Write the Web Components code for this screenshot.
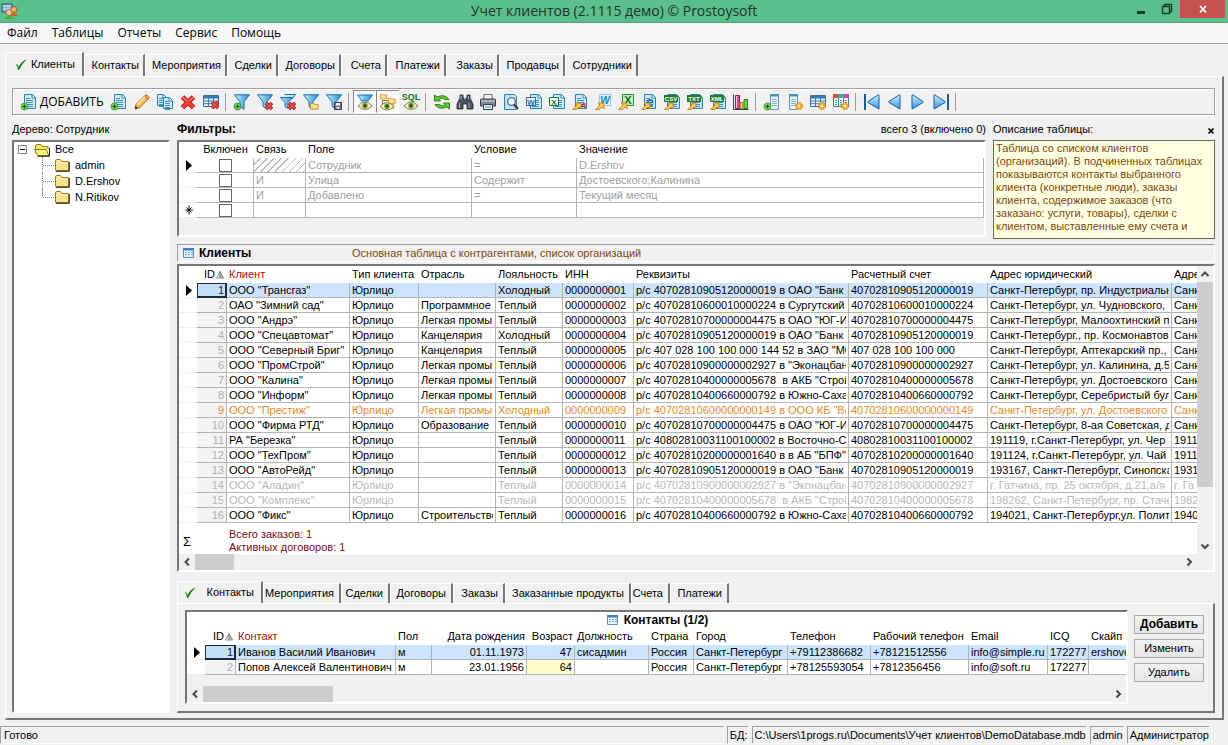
<!DOCTYPE html>
<html lang="ru">
<head>
<meta charset="utf-8">
<title>Учет клиентов</title>
<style>
  html, body { height: 100%; }
  body {
    margin: 0;
    background: #f0f0f0;
    color: #000;
    font: 11px/13px "Liberation Sans", Arial, sans-serif;
  }
</style>
</head>
<body>
<crm-window></crm-window>

<script>
const RESET = `
  * { box-sizing: border-box; }
  :host { box-sizing: border-box; }
  button, input { font: inherit; color: inherit; margin: 0; padding: 0; border: 0; background: none; }
  svg { display: block; }
`;

class BaseElement extends HTMLElement {
  connectedCallback() {
    if (this.shadowRoot) return;
    const root = this.attachShadow({ mode: 'open' });
    const t = document.createElement('template');
    t.innerHTML = `<style>${RESET}${this.css()}</style>${this.html()}`;
    root.append(t.content.cloneNode(true));
  }
  css() { return ':host{display:block}'; }
  html() { return '<slot></slot>'; }
}

/* ---------- icons ---------- */
const page = (x = 3, y = 0, w = 12, h = 15) => `
  <path d="M${x + .5} ${y + .5}h${w - 4}l3 3v${h - 4}h-${w - 1}z" fill="#cdeafa" stroke="#2683b3"/>
  <path d="M${x + w - 4} ${y + 1}v3h3" fill="#fff" stroke="#2683b3"/>
  <path d="M${x + 2} ${y + 4.5}h4M${x + 2} ${y + 6.5}h${w - 5}M${x + 2} ${y + 8.5}h${w - 5}M${x + 2} ${y + 10.5}h${w - 5}M${x + 2} ${y + 12.5}h${w - 5}" stroke="#3f8fc0"/>`;
const plus = (x = 0, y = 9) => `
  <circle cx="${x + 3.5}" cy="${y + 3.5}" r="3.5" fill="#8fdc6a" stroke="#2a8a1c" stroke-width=".8"/>
  <path d="M${x + 3.5} ${y + 1.5}v4M${x + 1.5} ${y + 3.5}h4" stroke="#0a5a08" stroke-width="1.3"/>`;
const redX = (x = 8, y = 8) => `
  <path d="M${x + 1} ${y + 1}l6 6m0-6l-6 6" stroke="#9c1414" stroke-width="3.4"/>
  <path d="M${x + 1} ${y + 1}l6 6m0-6l-6 6" stroke="#ee4a42" stroke-width="1.9"/>`;
const funnel = (dx = 0) => `<path d="M${dx + .5} .8h15l-5.500 7v7.500l-4-3v-4.500z" fill="url(#fn)" stroke="#1b6fa8"/>`;
const eye = (x = 1, y = 8) => `
  <path d="M${x} ${y + 4}q7-8 14 0q-7 7-14 0z" fill="#f6efc6" stroke="#9a7440"/>
  <circle cx="${x + 7}" cy="${y + 3.7}" r="2.700" fill="#5d9a2c"/><circle cx="${x + 7}" cy="${y + 3.7}" r="1.1" fill="#183208"/>`;
const arrow = `<path d="M.5 15.500l4.500-4.500-2-2h6v6l-2-2-2.500 2.500z" fill="#ffc64a" stroke="#c47a10" stroke-width=".8"/>`;
const gear = (x = 12, y = 12) => `
  <circle cx="${x}" cy="${y}" r="3.200" fill="none" stroke="#d48a14" stroke-width="1.800" stroke-dasharray="1.600 .9"/>
  <circle cx="${x}" cy="${y}" r="2.300" fill="#fff0c0" stroke="#f0a828" stroke-width="1.700"/>`;
const table = (h = '#2f7db8') => `
  <path d="M.5 1.500h15v11h-15z" fill="#e3f3fd" stroke="#3a6f9c"/><path d="M1 2h14v2.500h-14z" fill="${h}"/>
  <path d="M1 7h14M1 9.700h14M5.500 4v8M10.500 4v8" stroke="#3f7fb0"/>`;
const folder = (x, y, s = 1) => `<g transform="translate(${x} ${y}) scale(${s})"><path d="M.5 1.500h3l1 1h4v5h-8z" fill="#ffe08a" stroke="#c58a1c" stroke-width=".9"/></g>`;
const tag = (label) => `${page(3, 0, 13, 15)}<path d="M0 1h14v7h-14z" fill="#1f7a2e"/>
  <text x="7" y="7" font-size="6" font-weight="700" fill="#fff" text-anchor="middle">${label}</text>${arrow}`;
const badge = (label, color) => `${page(4, 0, 12, 15)}<path d="M.5 3.500h9v8h-9z" fill="#f2faff" stroke="${color}"/>
  <text x="5" y="10.500" font-size="8" font-weight="700" fill="${color}" text-anchor="middle">${label}</text>`;
const triR = (x) => `<path d="M${x} 1.500v13q0 1 1 0l10-6q1-.5 0-1l-10-6.500q-1-.5-1 .5z" fill="url(#nav)" stroke="#16609e"/>`;
const triL = (x) => `<path d="M${x} 1.500v13q0 1-1 0l-10-6q-1-.5 0-1l10-6.500q1-.5 1 .5z" fill="url(#nav)" stroke="#16609e"/>`;

const ICONS = {
  pageAdd: page() + plus(),
  edit: `<path d="M1 15l1-4.500 9-9q1-1.200 2.300-.2l1.200 1.200q1 1.200 0 2.300l-9 9z" fill="#f9bf45" stroke="#a8671a"/>
    <path d="M3.500 10.500l8-8" stroke="#fff0b0" stroke-width="1.500"/><path d="M1 15l.7-3 2.300 2.300z" fill="#3a2a1a"/>
    <path d="M11 2l3 3" stroke="#d9665a" stroke-width="1.600"/>`,
  copy: page(0, 0, 10, 12) + page(6, 3, 10, 12),
  remove: `<path d="M2.500 3l11 10.500m0-10.500l-11 10.500" stroke="#a31515" stroke-width="5"/>
    <path d="M2.500 3l11 10.500m0-10.500l-11 10.500" stroke="#ee3e38" stroke-width="3.400"/><path d="M2 2.500l5 4.500M14 2.500l-4 4" stroke="#ff9a90"/>`,
  tableDel: table() + redX(8, 7),
  fAdd: funnel() + plus(0, 9),
  fDel: funnel() + redX(8, 8),
  fDelAll: `<path d="M4.500.5h11l-4 5" fill="#bfe6fb" stroke="#1b6fa8"/><path d="M.5 3.500h12l-4.500 5v6l-3-2v-4z" fill="url(#fn)" stroke="#1b6fa8"/>` + redX(8, 8),
  fOpen: funnel() + folder(7, 8, .95),
  fSave: funnel() + `<path d="M8.500 8.500h7v7h-7z" fill="#7a6e90" stroke="#3a3048"/><path d="M10 9h4v2.500h-4z" fill="#f4f4fa"/><path d="M10.500 13h3v2h-3z" fill="#d8d8e4"/>`,
  fEye: `<path d="M.5 1h15l-4.500 6h-6z" fill="url(#fn)" stroke="#1b6fa8"/>` + eye(1, 8),
  treeEye: `<path d="M2.500 6v6.500h6M2.500 6.500h6" fill="none" stroke="#8a7a50"/>` + folder(0, -1, .8) + folder(8, 3, .85) + folder(8, 9, .7) + eye(0, 8.5),
  sql: `<text x="8" y="6" font-size="9" font-weight="700" fill="#11752a" text-anchor="middle">SQL</text>` + eye(1, 8),
  refresh: `<path d="M.5 1v6h6l-2-2q4-2 6.500.5h4q-4-6-12-2.500z" fill="#5ed02a" stroke="#237a12" stroke-width=".9"/>
    <path d="M15.500 15v-6h-6l2 2q-4 2-6.500-.5h-4q4 6 12 2.500z" fill="#5ed02a" stroke="#237a12" stroke-width=".9"/>`,
  find: `<path d="M3 1h3v3h1v2h2v-2h1v-3h3v3l3 6v5h-6v-5h-4v5h-6v-5l3-6z" fill="#4b5560" stroke="#20272e" stroke-width=".8"/>
    <path d="M4 2v3M2.500 9v5M11.500 2v3M12 9v5" stroke="#aab4bd"/>`,
  print: `<path d="M4 .5h8v5h-8z" fill="#fff" stroke="#667"/><path d="M.5 6q0-1 1-1h13q1 0 1 1v6h-15z" fill="#7d8791" stroke="#3a4148"/>
    <path d="M1 7h14" stroke="#dde3e8"/><path d="M3.500 10.500h9v5h-9z" fill="#dff1fd" stroke="#3a4148"/><path d="M5 13h6" stroke="#5a92bd"/>`,
  preview: `<path d="M1.500.5h10l2 2v13h-12z" fill="#bfe3f8" stroke="#2683b3"/><circle cx="8.500" cy="7.500" r="3.800" fill="#eefaff" stroke="#5a6f80" stroke-width="1.300"/>
    <path d="M11 10.500l4 4.500" stroke="#2d3c48" stroke-width="2.200"/>`,
  word: badge('W', '#1f6fb5'),
  excel: badge('X', '#1f7a2e'),
  rtf: page(3, 0, 12, 15) + `<text x="11.500" y="13.500" font-size="8" font-weight="700" font-style="italic" fill="#b02a20" text-anchor="middle">A</text>` + arrow,
  toWord: `<path d="M4.500.5h11v11h-11z" fill="#e6f4fe" stroke="#9cc8e6"/><text x="10" y="9.500" font-size="10" font-weight="700" font-style="italic" fill="#1f7ac8" text-anchor="middle">W</text>` + arrow,
  toExcel: `<path d="M4.500.5h11v11h-11z" fill="#c9ecc2" stroke="#278a35"/><text x="10" y="10" font-size="11" font-weight="700" fill="#146b24" text-anchor="middle">X</text>` + arrow,
  html: page(3, 0, 12, 15) + `<text x="9" y="12" font-size="13" font-weight="700" fill="#1668b8" text-anchor="middle">e</text>` + arrow,
  csv: tag('CSV'), txt: tag('TXT'), xml: tag('XML'),
  chart: `<path d="M.5.5v15h15" fill="none" stroke="#345"/><path d="M2.500 1.500h4v13h-4z" fill="#e64a9e" stroke="#8a1458"/>
    <path d="M7 8.500h3v6h-3z" fill="#f8d048" stroke="#a87a10"/><path d="M11 5.500h3.500v9h-3.500z" fill="#7ad048" stroke="#2c7a18"/><path d="M3.500 2v12" stroke="#ffc0e0"/>`,
  colAdd: `<path d="M6.500.5h8v15h-8z" fill="#e9f5fd" stroke="#6a93b4"/><path d="M6 .5h9v2h-9z" fill="#3f8fc0"/><path d="M8 5.500h5M8 7.500h5M8 9.500h5M8 11.500h5" stroke="#8ab4d4"/>` + plus(0, 9),
  colSet: `<path d="M2.500.5h8v15h-8z" fill="#e9f5fd" stroke="#6a93b4"/><path d="M2 .5h9v2h-9z" fill="#3f8fc0"/><path d="M4 5.500h5M4 7.500h5M4 9.500h5M4 11.500h5" stroke="#8ab4d4"/>` + gear(),
  tabSet: table() + gear(),
  tabColor: `<path d="M.5.5h15v12h-15z" fill="#fff" stroke="#3a7f9c"/><path d="M0 0h5v4h-5z" fill="#e8483c"/><path d="M5 0h6v4h-6z" fill="#30b0a0"/><path d="M11 0h5v4h-5z" fill="#c848b8"/>
    <path d="M5.500 4v8M10.500 4v8M2 6.500h2M7 6.500h2M12 6.500h2M2 8.500h2M7 8.500h2M12 8.500h2M2 10.500h2M7 10.500h2" stroke="#2a9aa8"/>` + gear(),
  first: `<path d="M1 0v16" stroke="#16609e" stroke-width="2"/>` + triL(15),
  prev: triL(13), next: triR(2),
  last: `<path d="M15 0v16" stroke="#16609e" stroke-width="2"/>` + triR(1),
  check: `<path d="M2 7.500q1.500-1 2.500 2.500q3-6 8-7.500q-4.500 4-7.500 10.500h-1q-.5-4-2-5.500z" fill="#0f7d12"/>`,
  grid: `<path d="M2.500 3.500h10v9h-10z" fill="#eaf4fd" stroke="#5f8cba"/><path d="M2 3h11v2.500h-11z" fill="#3f7fc4"/><path d="M4 7.500h2M7 7.500h2M10 7.500h2M4 9.500h2M7 9.500h2M10 9.500h2" stroke="#6fa4d8"/>`,
  row: `<path d="M5 3v11l6-5.500z"/>`,
  star: `<path d="M8 3.500v9M4 8h8M5.500 5.500l5 5M10.500 5.500l-5 5" stroke="#000" stroke-width=".9"/>`,
  sort: `<path d="M1.500 11L5 4.500v6.500z" fill="#eee" stroke="#999"/><path d="M5 4.500v6.500h3.500z" fill="#bbb" stroke="#888"/>`,
  folderShut: `<path d="M1.500 4q0-1.500 1-1.500h4l1.500 2h6.500v9h-13z" fill="#ffe08c" stroke="#a07820"/><path d="M2 6h11.500" stroke="#fff6cc"/><path d="M15.300 5v9.300H2" fill="none" stroke="#222"/>`,
  folderOpen: `<path d="M1.500 11v-7q0-1.500 1.500-1.500h4l1.500 2h5.500v3" fill="#f4e86a" stroke="#8a8010"/><path d="M0.500 7.500h11.500l3 6h-11.500z" fill="#fff47a" stroke="#8a8010"/><path d="M3.500 14.300h12M15.500 6v8" stroke="#222"/>`,
  app: `<path d="M0 1h10v8h-10z" fill="#7fb4d8" stroke="#28526e"/><path d="M1 3h8M1 6h8" stroke="#d8ecf8"/><circle cx="12" cy="6.500" r="3" fill="#f0b060" stroke="#9c5a1c"/>
    <path d="M8 13q4-6 8 0z" fill="#e05a28"/><circle cx="7" cy="9.500" r="3" fill="#f2c890" stroke="#9a6020" stroke-width=".8"/><path d="M2.500 16q4.500-7 9 0z" fill="#48b030"/>`,
  min: `<path d="M4 10h8v3h-8z" fill="#163c2a"/>`,
  restore: `<path d="M3.500 5.500h7v7h-7zM5.500 5v-1.500h7v7h-2" fill="none" stroke="#163c2a" stroke-width="1.400"/>`,
  close: `<path d="M5 5l6 6.500m0-6.500l-6 6.500" stroke="#fff" stroke-width="1.700"/>`,
  closeSmall: `<path d="M9.500 5.500l5 5m0-5l-5 5" stroke="#000" stroke-width="1.700"/>`,
  up: `<path d="M4.500 10l3.500-3.500 3.500 3.500" fill="none" stroke="#4a4a4a" stroke-width="2"/>`,
  down: `<path d="M4.500 6.500l3.500 3.500 3.500-3.500" fill="none" stroke="#4a4a4a" stroke-width="2"/>`,
  left: `<path d="M10 4.500l-3.500 3.500 3.500 3.500" fill="none" stroke="#4a4a4a" stroke-width="2"/>`,
  right: `<path d="M6.500 4.500l3.500 3.500-3.500 3.500" fill="none" stroke="#4a4a4a" stroke-width="2"/>`
};
const DEFS = `<defs><linearGradient id="fn"><stop offset="0" stop-color="#d6f3ff"/><stop offset=".5" stop-color="#6cc2ee"/><stop offset="1" stop-color="#2f8ccc"/></linearGradient>
  <linearGradient id="nav" x2="0" y2="1"><stop offset="0" stop-color="#d2efff"/><stop offset="1" stop-color="#2f96e0"/></linearGradient></defs>`;

class CrmIcon extends BaseElement {
  css() { return ':host{display:inline-block;width:16px;height:16px;flex:none} svg{overflow:visible;font-family:"Liberation Sans",sans-serif}'; }
  html() { return `<svg width="16" height="16" viewBox="0 0 16 16" aria-hidden="true">${DEFS}${ICONS[this.getAttribute('name')] || ''}</svg>`; }
}

/* ---------- window chrome ---------- */
class CrmTitlebar extends BaseElement {
  css() { return `
    :host { display: flex; height: 23px; background: #5bbf8d; border-bottom: 1px solid #5a9c7c; font: 14px/22px "Open Sans", "Noto Sans", sans-serif; color: #1c3328; }
    .side { flex: 1; display: flex; padding: 0 3px 0 2px; align-items: flex-start; }
    .side:last-child { justify-content: flex-end; }
    .side crm-icon { margin-top: 3px; }
    h1 { margin: 0; font: inherit; white-space: nowrap; }
    button { width: 26px; height: 18px; display: grid; place-items: center; }
    .close { width: 45px; background: #c75050; }
    .side button crm-icon { margin: 0; }`; }
  html() { return `<div class="side"><crm-icon name="app"></crm-icon></div><h1><slot></slot></h1>
    <div class="side"><button aria-label="Свернуть"><crm-icon name="min"></crm-icon></button>
    <button aria-label="Развернуть"><crm-icon name="restore"></crm-icon></button>
    <button class="close" aria-label="Закрыть"><crm-icon name="close"></crm-icon></button></div>`; }
}

class CrmMenu extends BaseElement {
  css() { return `
    :host { display: flex; gap: 14px; height: 21px; padding: 0 7px; background: #f5f7f9; border-bottom: 1px solid #a0a0a0; font: 12px/20px "Open Sans", "Noto Sans", sans-serif; }`; }
  html() { return this.getAttribute('items').split('|').map(t => `<button>${t}</button>`).join(''); }
}

/* tabs="text:width|..." ; the first one is selected */
class CrmTabs extends BaseElement {
  css() { return `
    :host { display: flex; align-items: flex-end; height: 24px; --end: 4px; --mark: 8px; }
    :host([compact]) { height: 22px; --end: 5px; --mark: 5px; }
    button { height: calc(100% - 2px); display: flex; align-items: center; justify-content: flex-end; white-space: nowrap; padding-right: var(--end);
      border-top: 1px solid #fff; border-left: 1px solid #fff; border-right: 2px solid #777; }
    button[aria-selected=true] { height: 100%; padding-right: 7px; }
    crm-icon { margin: 0 auto 0 var(--mark); }`; }
  html() { return this.getAttribute('tabs').split('|').map((s, i) => {
    const [t, w] = s.split(':');
    return `<button role="tab" aria-selected="${i === 0}" style="width:${w}px">${i ? '' : '<crm-icon name="check"></crm-icon>'}${t}</button>`; }).join(''); }
}

class CrmToolbar extends BaseElement {
  css() { return `
    :host { display: flex; align-items: center; height: 27px; border: 1px solid #a0a0a0; box-shadow: inset 1px 1px #fff, 1px 1px #fff; }
    button { width: 23px; height: 23px; display: grid; place-items: center; flex: none; }
    button.add { width: 94px; display: flex; align-items: center; gap: 3px; padding-left: 8px; font: 12px/16px "Open Sans", "Noto Sans", sans-serif; white-space: nowrap; }
    button[aria-pressed=true] { background: #f8f8f8; border: 1px solid; border-color: #888 #fff #fff #888; }
    i { width: 5px; height: 18px; flex: none; border-left: 1px solid #999; margin-left: 3px; }`; }
  html() {
    const names = 'pageAdd edit copy remove tableDel | fAdd fDel fDelAll fOpen fSave | *fEye *treeEye sql | refresh find print preview word excel rtf toWord toExcel html csv txt xml chart | colAdd colSet tabSet tabColor | first prev next last |';
    return `<button class="add"><crm-icon name="pageAdd"></crm-icon>ДОБАВИТЬ</button>` + names.split(' ').map(n => n === '|' ? '<i></i>'
      : `<button aria-label="${n.replace('*', '')}"${n[0] === '*' ? ' aria-pressed="true"' : ''}><crm-icon name="${n.replace('*', '')}"></crm-icon></button>`).join('');
  }
}

class CrmTree extends BaseElement {
  css() { return `
    :host { display: block; background: #fff; border: 2px solid; border-color: #777 #fff #fff #777; }
    ul { list-style: none; margin: 0; padding: 0; }
    li div { display: flex; align-items: center; gap: 5px; height: 16px; }
    .root { padding-left: 4px; height: 15px; }
    .box { width: 9px; height: 9px; border: 1px solid #888; display: grid; place-items: center; margin-right: 2px; }
    .box::after { content: ""; width: 5px; height: 1px; background: #000; }
    ul ul { margin-left: 28px; }
    ul ul div { border-left: 1px dotted #888; }
    ul ul li:last-child div { border-image: linear-gradient(#999 50%, transparent 50%) 1; }
    ul ul div::before { content: ""; width: 11px; margin-right: -5px; border-top: 1px dotted #888; }`; }
  html() { return `<ul role="tree"><li role="treeitem"><div class="root"><span class="box"></span><crm-icon name="folderOpen"></crm-icon>Все</div><ul role="group">${
    ['admin', 'D.Ershov', 'N.Ritikov'].map(n => `<li role="treeitem"><div><crm-icon name="folderShut"></crm-icon>${n}</div></li>`).join('')}</ul></li></ul>`; }
}

/* ---------- tables ---------- */
const GRID_CSS = `
  table { width: 100%; table-layout: fixed; border-collapse: separate; border-spacing: 0; }
  td, th { height: 15px; padding: 0 2px; font-weight: 400; text-align: left; line-height: 14px; white-space: nowrap; }
  th { height: 17px; padding-bottom: 2px; background: #fff; }
  td { background: #fff; border-right: 1px solid #b4b4b4; border-bottom: 1px solid #b4b4b4; }
  td > span, th > span { display: block; overflow: hidden; }
  td:first-child { border-right: 0; border-bottom-color: #eee; }
  td:first-child crm-icon { display: block; height: 14px; margin: -1px 0 1px; }
  .num { text-align: right; }
`;

class CrmFilters extends BaseElement {
  css() { return `${GRID_CSS}
    :host { display: block; height: 97px; border: 2px solid; border-color: #777 #fff #fff #777; }
    th { height: 16px; }
    td { color: #a0a0a0; }
    td:nth-child(2), th:nth-child(2) { text-align: center; }
    input { appearance: none; display: block; width: 13px; height: 13px; margin: 0 auto; border: 1px solid #666; background: #fff; }
    .none { background: repeating-linear-gradient(135deg, #fff 0 4px, #bbb 4px 5px); }`; }
  html() {
    const rows = [['row', null, 'Сотрудник', '=', 'D.Ershov'], ['', 'И', 'Улица', 'Содержит', 'Достоевского;Калинина'], ['', 'И', 'Добавлено', '=', 'Текущий месяц'], ['star', '', '', '', '']];
    return `<table><colgroup><col style="width:18px"><col style="width:57px"><col style="width:52px"><col style="width:166px"><col style="width:105px"><col></colgroup>
      <thead><tr><th></th><th>Включен</th><th>Связь</th><th>Поле</th><th>Условие</th><th>Значение</th></tr></thead><tbody>${rows.map(r =>
      `<tr><td>${r[0] ? `<crm-icon name="${r[0]}"></crm-icon>` : ''}</td><td><input type="checkbox" aria-label="Включен"></td><td${r[1] === null ? ' class="none"' : ''}>${r[1] || ''}</td><td>${r[2]}</td><td>${r[3]}</td><td>${r[4]}</td></tr>`).join('')}</tbody></table>`;
  }
}

class CrmScroll extends BaseElement {
  css() { return `
    :host { display: flex; background: #f0f0f0; align-items: center; height: 16px; }
    :host([corner]) { padding-right: 16px; }
    :host([vertical]) { flex-direction: column; width: 16px; height: auto; }
    .track { flex: 1; align-self: stretch; display: flex; }
    :host([vertical]) .track { flex-direction: column; }
    .thumb { background: #cdcdcd; }`; }
  html() {
    const v = this.hasAttribute('vertical');
    return `<crm-icon name="${v ? 'up' : 'left'}"></crm-icon><div class="track"><div class="thumb" style="flex:0 0 ${this.getAttribute('thumb')}px"></div></div><crm-icon name="${v ? 'down' : 'right'}"></crm-icon>`;
  }
}

const DATA = {
  clients: {
    cols: [['', 18], ['ID', 30], ['Клиент', 123], ['Тип клиента', 69], ['Отрасль', 77], ['Лояльность', 67], ['ИНН', 71], ['Реквизиты', 215], ['Расчетный счет', 139], ['Адрес юридический', 184], ['Адре', 0]],
    rows: `ООО "Трансгаз"||Холодный|р/с 40702810905120000019 в ОАО "Банк|40702810905120000019|Санкт-Петербург, пр. Индустриальн|Санк
ОАО "Зимний сад"|Программное|Теплый|р/с 40702810600010000224 в Сургутский|40702810600010000224|Санкт-Петербург, ул. Чудновского,|Санк
ООО "Андрэ"|Легкая промы|Теплый|р/с 40702810700000004475 в ОАО "ЮГ-И|40702810700000004475|Санкт-Петербург, Малоохтинский п|Санк
ООО "Спецавтомат"|Канцелярия|Холодный|р/с 40702810905120000019 в ОАО "Банк|40702810905120000019|Санкт-Петербург., пр. Космонавтов|Санк
ООО "Северный Бриг"|Канцелярия|Теплый|р/с 407 028 100 100 000 144 52 в ЗАО "МО|407 028 100 100 000|Санкт-Петербург, Аптекарский пр.,|Санк
ООО "ПромСтрой"|Легкая промы|Теплый|р/с 40702810900000002927 в "Эконацбан|40702810900000002927|Санкт-Петербург, ул. Калинина, д.5|Санк
ООО "Калина"|Легкая промы|Теплый|р/с 40702810400000005678  в АКБ "Строй|40702810400000005678|Санкт-Петербург, ул. Достоевского|Санк
ООО "Информ"|Легкая промы|Теплый|р/с 40702810400660000792 в Южно-Сахал|40702810400660000792|Санкт-Петербург, Серебристый бул|Санк
ООО "Престиж"|Легкая промы|Холодный|р/с 40702810600000000149 в ООО КБ "Ве|40702810600000000149|Санкт-Петербург, ул. Достоевского|Санк
ООО "Фирма РТД"|Образование|Теплый|р/с 40702810700000004475 в ОАО "ЮГ-И|40702810700000004475|Санкт-Петербург, 8-ая Советская, д|Санк
РА "Березка"||Теплый|р/с 40802810031100100002 в Восточно-С|40802810031100100002|191119, г.Санкт-Петербург, ул. Чер|1911
ООО "ТехПром"||Теплый|р/с 40702810200000001640 в в АБ "БПФ"|40702810200000001640|191124, г.Санкт-Петербург, ул. Чай|1911
ООО "АвтоРейд"||Теплый|р/с 40702810905120000019 в ОАО "Банк|40702810905120000019|193167, Санкт-Петербург, Синопска|1931
ООО "Аладин"||Теплый|р/с 40702810900000002927 в "Эконацбан|40702810900000002927|г. Гатчина, пр. 25 октября, д.21,а/я|г. Га
ООО "Комплекс"||Теплый|р/с 40702810400000005678  в АКБ "Строй|40702810400000005678|198262, Санкт-Петербург, пр. Стаче|1982
ООО "Фикс"|Строительство|Теплый|р/с 40702810400660000792 в Южно-Сахал|40702810400660000792|194021, Санкт-Петербург,ул. Полит|1940`
      .split('\n').map((l, i) => { const c = l.split('|'); return [c[0], 'Юрлицо', c[1], c[2], String(i + 1).padStart(10, '0'), ...c.slice(3)]; }),
    tone: { 8: 'orange', 13: 'muted', 14: 'muted' }
  },
  contacts: {
    cols: [['', 18], ['ID', 31], ['Контакт', 160], ['Пол', 36], ['Дата рождения', 95], ['Возраст', 48], ['Должность', 74], ['Страна', 45], ['Город', 94], ['Телефон', 83], ['Рабочий телефон', 98], ['Email', 79], ['ICQ', 41], ['Скайп', 0]],
    rows: [['Иванов Василий Иванович', 'м', '01.11.1973', '47', 'сисадмин', 'Россия', 'Санкт-Петербург', '+79112386682', '+78121512556', 'info@simple.ru', '172277', 'ershovo'],
      ['Попов Алексей Валентинович', 'м', '23.01.1956', '64', '', 'Россия', 'Санкт-Петербург', '+78125593054', '+7812356456', 'info@soft.ru', '172277', '']],
    right: [4, 5], tone: {}
  }
};

class CrmGrid extends BaseElement {
  css() { return `${GRID_CSS}
    :host { display: flex; flex-direction: column; border: 2px solid; border-color: #777 #fff #fff #777; min-width: 0; }
    .main { flex: 1; display: flex; min-height: 0; }
    .view { flex: 1; min-width: 0; overflow: hidden; background: var(--grid-ground, #fff); }
    thead th:nth-child(3) { color: #a01010; }
    th:nth-child(2) > span { display: flex; justify-content: flex-end; }
    th crm-icon { width: 10px; height: 14px; }
    td:nth-child(2) { text-align: right; color: #b0b0b0; background: #f2f2f2; }
    td:last-child, th:last-child { padding-right: 0; border-right: 0; }
    td > span { white-space: pre; }
    .on td:not(:first-child) { background: #cce4ff; }
    .on td:nth-child(2) { color: #222; background: #c4dffa; box-shadow: inset 0 0 0 1px #1a2a3a; border-color: #1a2a3a; }
    .orange td, .orange td:nth-child(2) { color: #e8892a; }
    .muted td, .muted td:nth-child(2) { color: #b8b8b8; }
    .warm { background: #ffffcc; }`; }
  html() {
    const d = DATA[this.getAttribute('source')], right = d.right || [];
    const cls = (i) => right.includes(i) ? ' class="num"' : '';
    const warm = this.getAttribute('source') === 'contacts';
    const v = this.getAttribute('vthumb');
    return `<slot name="caption"></slot><div class="main"><div class="view"><table><colgroup>${d.cols.map(c => `<col${c[1] ? ` style="width:${c[1]}px"` : ''}>`).join('')}</colgroup>
      <thead><tr>${d.cols.map((c, i) => `<th${cls(i)}><span>${c[0]}${i === 1 ? '<crm-icon name="sort"></crm-icon>' : ''}</span></th>`).join('')}</tr></thead>
      <tbody>${d.rows.map((r, n) => `<tr class="${n ? d.tone[n] || '' : 'on'}"><td>${n ? '' : '<crm-icon name="row"></crm-icon>'}</td><td><span>${n + 1}</span></td>${
        r.map((c, i) => `<td class="${right.includes(i + 2) ? 'num' : ''}${warm && n && i === 3 ? ' warm' : ''}"><span>${c}</span></td>`).join('')}</tr>`).join('')}</tbody></table>
      <slot name="totals"></slot></div>${v ? `<crm-scroll vertical thumb="${v}"></crm-scroll>` : ''}</div>
      <crm-scroll${v ? ' corner' : ''} thumb="${this.getAttribute('hthumb')}"></crm-scroll>`;
  }
}

class CrmTotals extends BaseElement {
  css() { return `:host { display: flex; align-items: center; padding-top: 5px; color: #7a0a14; }
    b { width: 18px; padding-left: 4px; font: 13px/13px "Liberation Sans", sans-serif; color: #000; } p { margin: 0 0 0 32px; }`; }
  html() { return '<b>Σ</b><p><slot></slot></p>'; }
}

class CrmNote extends BaseElement {
  css() { return `:host { display: block; height: 99px; padding: 1px 2px; overflow: hidden; border: 1px solid #6a6a5a; background: #ffffe1; color: #80480c; }`; }
}

class CrmHeading extends BaseElement {
  css() { return `
    :host { display: flex; align-items: center; height: 18px; padding-left: 3px; border: 1px solid; border-color: #a0a0a0 #fff #fff #a0a0a0; }
    h2 { margin: 0 0 0 2px; width: 153px; font: bold 12px/14px "Liberation Sans", sans-serif; }
    span { color: #80480c; white-space: nowrap; }`; }
  html() { return '<crm-icon name="grid"></crm-icon><h2><slot></slot></h2><span><slot name="hint"></slot></span>'; }
}

class CrmCaption extends BaseElement {
  css() { return `:host { display: flex; align-items: center; justify-content: center; gap: 3px; height: 16px; background: #fff; font: bold 12px/14px "Liberation Sans", sans-serif; }`; }
  html() { return '<crm-icon name="grid"></crm-icon><slot></slot>'; }
}

class CrmButton extends BaseElement {
  css() { return `:host { display: block; } button { display: block; width: 100%; height: 19px; border: 1px solid #a9a9a9; background: linear-gradient(#f2f2f2, #e6e6e6); text-align: center; }
    :host([primary]) button { font-weight: 700; font-size: 12px; }`; }
  html() { return '<button><slot></slot></button>'; }
}

class CrmStatus extends BaseElement {
  css() { return `
    :host { display: flex; gap: 3px; height: 20px; padding: 1px 18px 0 0; }
    span { padding: 0 0 0 2px; line-height: 17px; height: 18px; white-space: nowrap; border: 1px solid; border-color: #a0a0a0 #fff #fff #a0a0a0; }
    span:first-of-type { flex: 1; padding-left: 3px; }`; }
  html() { return this.getAttribute('items').split('|').map(t => `<span>${t}</span>`).join(''); }
}

class CrmWindow extends BaseElement {
  css() { return `
    :host { display: flex; flex-direction: column; min-height: 100vh; background: #f0f0f0; }
    .body { flex: 1; display: flex; flex-direction: column; padding: 7px 4px 5px 5px; border-top: 1px solid #fff; }
    .panel { flex: 1; display: flex; flex-direction: column; padding: 11px 7px 5px 6px; border: 1px solid #fff; border-right: 2px solid #777; border-bottom: 2px solid #777; }
    .work { flex: 1; display: grid; grid-template-columns: 158px minmax(0, 1fr); column-gap: 7px; padding-top: 8px; }
    .left, .right, .mid, .info { display: flex; flex-direction: column; min-width: 0; }
    .left crm-tree { flex: 1; }
    .cap { display: flex; justify-content: space-between; height: 17px; align-items: flex-start; white-space: nowrap; }
    .cap b { font-size: 12px; }
    .cap button { width: 16px; height: 16px; }
    .top { display: grid; grid-template-columns: minmax(0, 1fr) 222px; column-gap: 7px; }
    crm-heading { margin: 5px 0 2px; }
    .clients { flex: 1; }
    .sub { margin-top: 9px; }
    .subpanel { display: grid; grid-template-columns: minmax(0, 1fr) 70px; gap: 6px; padding: 6px 9px 7px 7px; border: 1px solid #fff; border-right: 2px solid #777; border-bottom: 2px solid #777; }
    .contacts { --grid-ground: #f0f0f0; height: 94px; }
    .actions { display: grid; align-content: start; gap: 5px; padding-top: 5px; }`; }
  html() { return `
    <crm-titlebar>Учет клиентов (2.1115 демо) © Prostoysoft</crm-titlebar>
    <crm-menu items="Файл|Таблицы|Отчеты|Сервис|Помощь"></crm-menu>
    <div class="body">
      <crm-tabs tabs="Клиенты:79|Контакты:61|Мероприятия:82|Сделки:51|Договоры:63|Счета:46|Платежи:59|Заказы:53|Продавцы:66|Сотрудники:73"></crm-tabs>
      <div class="panel">
        <crm-toolbar></crm-toolbar>
        <div class="work">
          <div class="left"><div class="cap">Дерево: Сотрудник</div><crm-tree></crm-tree></div>
          <div class="right">
            <div class="top">
              <div class="mid"><div class="cap"><b>Фильтры:</b><span>всего 3 (включено 0)</span></div><crm-filters></crm-filters></div>
              <div class="info"><div class="cap"><span>Описание таблицы:</span><button aria-label="Скрыть описание"><crm-icon name="closeSmall"></crm-icon></button></div>
                <crm-note>Таблица со списком клиентов (организаций). В подчиненных таблицах показываются контакты выбранного клиента (конкретные люди), заказы клиента, содержимое заказов (что заказано: услуги, товары), сделки с клиентом, выставленные ему счета и</crm-note></div>
            </div>
            <crm-heading>Клиенты<span slot="hint">Основная таблица с контрагентами, список организаций</span></crm-heading>
            <crm-grid class="clients" source="clients" vthumb="205" hthumb="39">
              <crm-totals slot="totals">Всего заказов: 1<br>Активных договоров: 1</crm-totals>
            </crm-grid>
            <crm-tabs class="sub" compact tabs="Контакты:86|Мероприятия:78|Сделки:49|Договоры:63|Заказы:52|Заказанные продукты:126|Счета:39|Платежи:59"></crm-tabs>
            <div class="subpanel">
              <crm-grid class="contacts" source="contacts" hthumb="130"><crm-caption slot="caption">Контакты (1/2)</crm-caption></crm-grid>
              <div class="actions"><crm-button primary>Добавить</crm-button><crm-button>Изменить</crm-button><crm-button>Удалить</crm-button></div>
            </div>
          </div>
        </div>
      </div>
    </div>
    <crm-status items="Готово|БД:|C:\\Users\\1progs.ru\\Documents\\Учет клиентов\\DemoDatabase.mdb|admin|Администратор"></crm-status>`; }
}

Object.entries({
  'crm-icon': CrmIcon, 'crm-titlebar': CrmTitlebar, 'crm-menu': CrmMenu, 'crm-tabs': CrmTabs, 'crm-toolbar': CrmToolbar, 'crm-tree': CrmTree,
  'crm-filters': CrmFilters, 'crm-scroll': CrmScroll, 'crm-grid': CrmGrid, 'crm-totals': CrmTotals, 'crm-note': CrmNote, 'crm-heading': CrmHeading,
  'crm-caption': CrmCaption, 'crm-button': CrmButton, 'crm-status': CrmStatus, 'crm-window': CrmWindow
}).forEach(([name, cls]) => customElements.define(name, cls));
</script>
</body>
</html>
